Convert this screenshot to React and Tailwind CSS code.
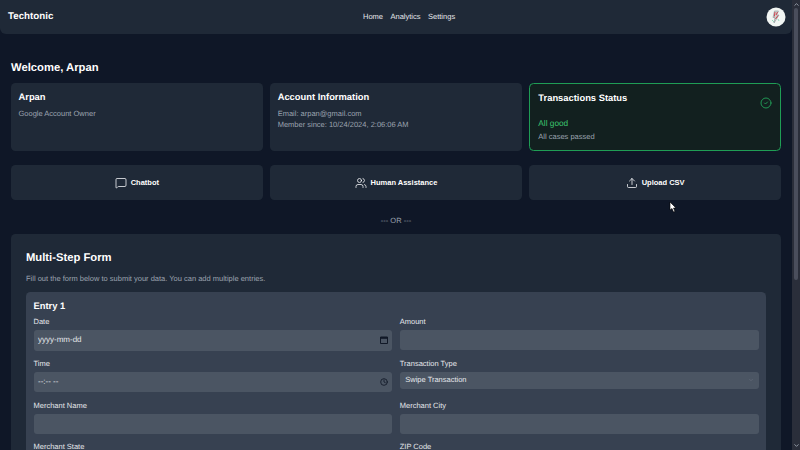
import React from "react";
import { MessageSquare, Users, Upload, CircleCheck, Clock, ChevronDown, ChevronUp } from "lucide-react";

const font = { fontFamily: '"Liberation Sans", Arial, sans-serif' };

function Field({ label, h = "h-[20px]", mb = "mb-[8.5px]", children }) {
  return (
    <div className={`flex flex-col ${mb}`}>
      <label className="text-[7.5px] leading-[10px] text-[#e5e7eb] mb-[3px]">{label}</label>
      <div className={`${h} bg-[#4b5563] rounded-[3px] flex items-center justify-between px-[4.5px] text-[8px] text-[#e5e7eb]`}>
        {children}
      </div>
    </div>
  );
}

function ActionButton({ Icon, children }) {
  return (
    <button className="h-[35px] rounded-[4.5px] bg-[#1f2937] text-white text-[7.5px] font-bold flex items-center justify-center gap-[4px]">
      <Icon size={12} strokeWidth={1.6} className="text-[#f3f4f6]" />
      {children}
    </button>
  );
}

export default function App() {
  return (
    <div style={font} className="relative w-[800px] h-[450px] overflow-hidden flex bg-[#0f1727] text-white opacity-[0.999] [text-rendering:geometricPrecision]">
      <div className="w-[792px] h-[450px] overflow-hidden flex flex-col shrink-0">
        <nav className="h-[34px] shrink-0 bg-[#1f2937] rounded-b-[6px] flex items-center justify-between pl-[8px] pr-[6.5px] relative">
          <span className="text-[9.75px] font-bold">Techtonic</span>
          <div className="absolute left-[363px] top-[11px] flex gap-[7.5px] text-[7.5px] leading-[11px] text-[#e5e7eb]">
            <span>Home</span>
            <span>Analytics</span>
            <span>Settings</span>
          </div>
          <svg width="20" height="20" viewBox="0 0 20 20">
            <circle cx="10" cy="10" r="9.5" fill="#f1f5f3" />
            <path d="M8.5 4 L12.5 4 L10.5 8 L13 8 L8 16 L9 10.5 L7 10.5 Z" fill="#cfd6d3" stroke="#8b9296" strokeWidth="0.6" />
            <path d="M9 5 L8.3 9.5 M11.5 5 L10 8 M12 8.5 L9.5 12" stroke="#d2434f" strokeWidth="1" />
            <path d="M6 13 L8 15 M12 12 L13 14" stroke="#7fd0ae" strokeWidth="0.8" />
          </svg>
        </nav>

        <main className="px-[11px] pt-[28px] flex flex-col">
          <h1 className="text-[11.25px] leading-[13px] font-bold mb-[7.5px]">Welcome, Arpan</h1>

          <div className="grid grid-cols-3 gap-[7.5px]">
            <section className="h-[68px] rounded-[4.5px] bg-[#1f2937] px-[7.5px] pt-[8px]">
              <h2 className="text-[9.375px] leading-[12px] font-bold">Arpan</h2>
              <p className="text-[7.5px] leading-[11px] text-[#9ca3af] mt-[5px]">Google Account Owner</p>
            </section>
            <section className="h-[68px] rounded-[4.5px] bg-[#1f2937] px-[7.5px] pt-[8px]">
              <h2 className="text-[9.375px] leading-[12px] font-bold">Account Information</h2>
              <p className="text-[7.5px] leading-[11px] text-[#9ca3af] mt-[5px]">Email: arpan@gmail.com</p>
              <p className="text-[7.5px] leading-[11px] text-[#9ca3af] mt-[0.5px]">Member since: 10/24/2024, 2:06:06 AM</p>
            </section>
            <section className="h-[68px] rounded-[4.5px] bg-[#12201f] border border-[#1f9d55] px-[8px] pt-[8px]">
              <div className="flex items-start justify-between">
                <h2 className="text-[9.375px] leading-[12px] font-bold">Transactions Status</h2>
                <CircleCheck size={12} strokeWidth={1.8} className="text-[#22a45a] mt-[5px]" />
              </div>
              <p className="text-[8.25px] leading-[12px] text-[#3cc46f] mt-[9px]">All good</p>
              <p className="text-[7.5px] leading-[11px] text-[#9ca3af] mt-[1px]">All cases passed</p>
            </section>
          </div>

          <div className="grid grid-cols-3 gap-[7.5px] mt-[14.5px]">
            <ActionButton Icon={MessageSquare}>Chatbot</ActionButton>
            <ActionButton Icon={Users}>Human Assistance</ActionButton>
            <ActionButton Icon={Upload}>Upload CSV</ActionButton>
          </div>

          <div className="text-center text-[7.5px] leading-[11px] text-[#9ca3af] mt-[15px] mb-[8px]">--- OR ---</div>

          <section className="bg-[#1f2937] rounded-[4.5px] px-[15px] pt-[17px]">
            <h2 className="text-[11.25px] leading-[15px] font-bold">Multi-Step Form</h2>
            <p className="text-[7.5px] leading-[11px] text-[#9ca3af] mt-[6.5px]">Fill out the form below to submit your data. You can add multiple entries.</p>
            <div className="bg-[#374151] rounded-[4.5px] px-[7.5px] pt-[7.5px] mt-[8.5px]">
              <h3 className="text-[9.375px] leading-[12px] font-bold mb-[5px]">Entry 1</h3>
              <div className="grid grid-cols-2 gap-x-[7.5px]">
                <Field label="Date" h="h-[21px]" mb="mb-[8px]">
                  <span>yyyy-mm-dd</span>
                  <svg width="8" height="8" viewBox="0 0 8 8">
                    <path d="M0.5 1 H7.5 V7.5 H0.5 Z" fill="none" stroke="#111827" strokeWidth="1" />
                    <rect x="0.5" y="1" width="7" height="1.8" fill="#111827" />
                  </svg>
                </Field>
                <Field label="Amount"></Field>
                <Field label="Time" mb="mb-[9px]">
                  <span>--:-- --</span>
                  <Clock size={8} strokeWidth={2.5} className="text-[#111827]" />
                </Field>
                <Field label="Transaction Type" h="h-[17px]">
                  <span className="pl-[1px] text-[7.5px]">Swipe Transaction</span>
                  <ChevronDown size={6} className="text-[#6b7280]" />
                </Field>
                <Field label="Merchant Name"></Field>
                <Field label="Merchant City"></Field>
                <div className="text-[7.5px] leading-[10px] text-[#e5e7eb]">Merchant State</div>
                <div className="text-[7.5px] leading-[10px] text-[#e5e7eb]">ZIP Code</div>
              </div>
              <div className="h-[20px]" />
            </div>
          </section>
        </main>
      </div>
      <div className="relative w-[8px] h-[450px] bg-[#2a2e3a] flex flex-col items-center justify-between text-[#9ca3af]">
        <ChevronUp size={7} strokeWidth={3} className="mt-[1px]" />
        <div className="w-[4px] h-[272px] rounded-[2px] bg-[#4a4e5c] absolute top-[8px] left-[2px]" />
        <ChevronDown size={7} strokeWidth={3} className="mb-[1px]" />
      </div>
      <svg width="8" height="12" viewBox="0 0 8 12" className="absolute left-[669px] top-[202px]">
        <path d="M1 0 L1 8 L3 6.5 L4.5 10 L6 9.5 L4.5 6 L7 6 Z" fill="#fff" stroke="#000" strokeWidth="0.6" />
      </svg>
    </div>
  );
}
